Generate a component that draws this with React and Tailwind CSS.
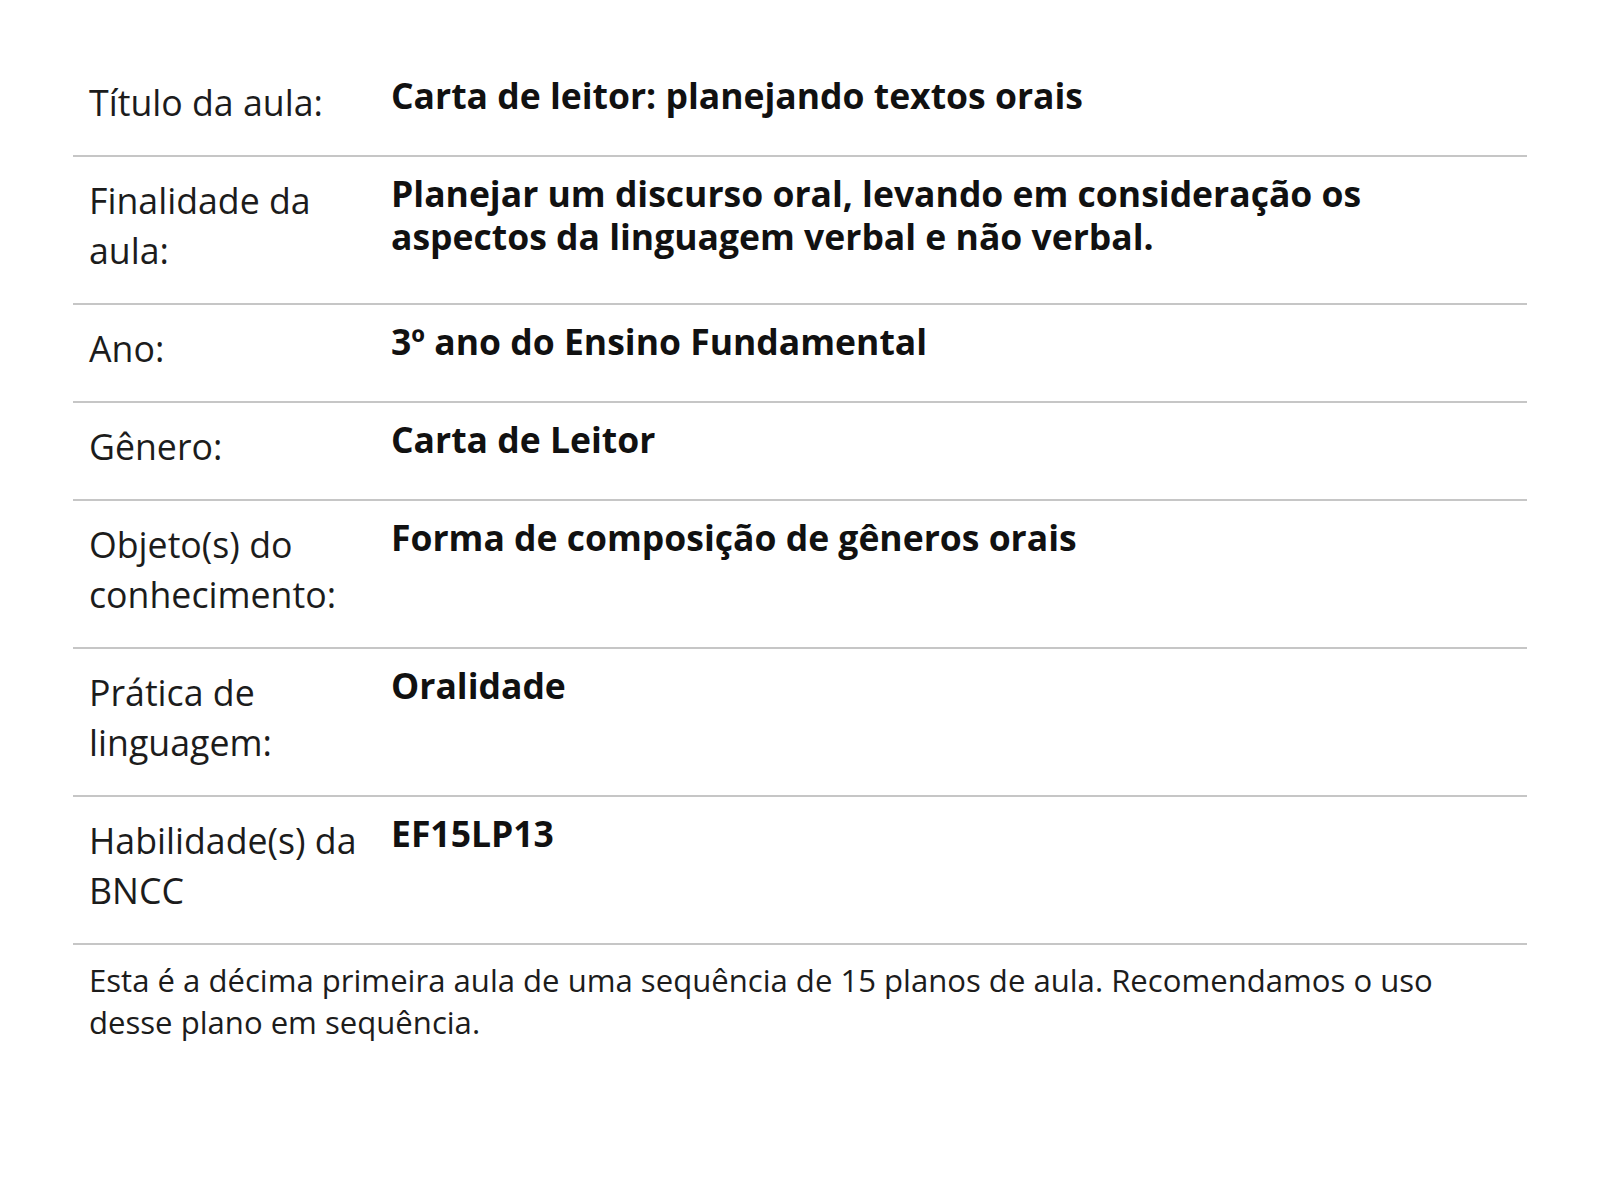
export default function App() {
  const rows = [
    ["Título da aula:", "Carta de leitor: planejando textos orais"],
    ["Finalidade da aula:", "Planejar um discurso oral, levando em consideração os aspectos da linguagem verbal e não verbal."],
    ["Ano:", "3º ano do Ensino Fundamental"],
    ["Gênero:", "Carta de Leitor"],
    ["Objeto(s) do conhecimento:", "Forma de composição de gêneros orais"],
    ["Prática de linguagem:", "Oralidade"],
    ["Habilidade(s) da BNCC", "EF15LP13"],
  ];
  return (
    <div
      className="min-h-screen bg-white px-[73px] pt-[59px] text-black"
      style={{ fontFamily: '"Open Sans", "Noto Sans", sans-serif' }}
    >
      <div className="flex flex-col">
        {rows.map(([label, value], i) => (
          <div key={i} className="flex border-b-2 border-[#c6c6c6]">
            <div className="w-[302px] shrink-0 px-4 pt-[18px] pb-[28px] text-[35.7px] leading-[50px] text-[#1c1c1c]">
              {label}
            </div>
            <div className="flex-1 px-4 pt-[15px] text-[35.5px] leading-[43px] font-bold text-[#111]">
              {value}
            </div>
          </div>
        ))}
      </div>
      <p className="px-4 pt-[14px] text-[31.1px] leading-[42px] text-[#1c1c1c]">
        Esta é a décima primeira aula de uma sequência de 15 planos de aula. Recomendamos o uso desse plano em sequência.
      </p>
    </div>
  );
}
